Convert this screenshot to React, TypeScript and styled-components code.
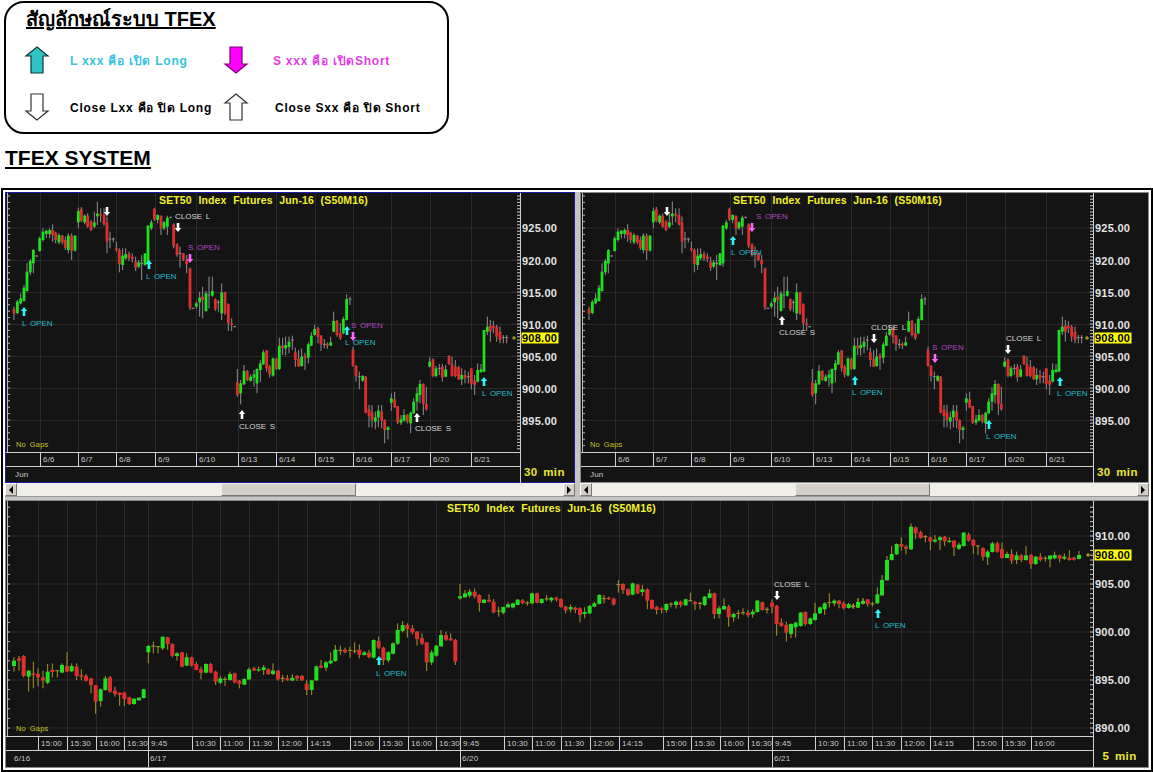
import React from "react";
import styled, { createGlobalStyle } from "styled-components";

/**
 * TFEX signal legend and three SET50 futures charts
 */

type Tone = "g" | "r" | "d";

interface Candle {
  x: number;
  tone: Tone;
  top: number;
  bottom: number;
  wickTop: number;
  wickBottom: number;
}

interface Note {
  x: number;
  y: number;
  text: string;
  tone: "long" | "short" | "close";
}

interface Mark {
  x: number;
  y: number;
  dir: "up" | "down";
  tone: "long" | "short" | "close";
}

// candles were read off a 3x crop, so each block has its crop origin
const readCandles = (originX: number, originY: number, src: string): Candle[] =>
  src
    .trim()
    .split(",")
    .map((row) => {
      const [x, tone, top, bottom, wickTop, wickBottom] = row.trim().split(/\s+/);
      return {
        x: originX + Number(x) / 3,
        tone: tone as Tone,
        top: originY + Number(top) / 3,
        bottom: originY + Number(bottom) / 3,
        wickTop: originY + Number(wickTop) / 3,
        wickBottom: originY + Number(wickBottom) / 3,
      };
    });

const halfHourCandles: Candle[] = [
  ...readCandles(
    0,
    185,
    `42 r 372 386 365 405, 52 g 350 384 345 388, 62 g 340 355 325 358, 72 g 308 348 300 350,
    81 g 260 318 235 320, 91 g 228 262 222 270, 100 g 195 235 192 265, 110 d 213 213 211 215,
    119 g 160 198 155 200, 129 g 140 165 130 170, 139 g 137 147 135 160, 149 g 135 147 130 160,
    158 r 135 150 118 170, 167 r 143 165 140 175, 177 g 150 172 145 178, 187 r 152 172 150 178,
    196 r 165 188 155 195, 205 g 152 195 145 205, 215 r 152 197 145 225, 225 g 152 197 150 200,
    235 g 78 112 68 130, 244 r 72 108 66 112, 254 g 92 112 88 118, 263 r 92 125 85 128,
    273 r 110 135 105 138, 283 g 112 125 80 130, 292 g 86 94 50 120, 302 r 86 92 70 112,
    312 r 90 118 70 122, 321 r 112 170 95 205, 330 d 162 162 140 190, 340 d 162 162 158 172,
    349 r 190 195 170 200, 358 r 195 237 190 262, 368 g 212 240 190 255, 377 g 207 220 190 225,
    387 r 207 220 200 228, 397 r 215 222 205 232, 407 r 230 248 215 258, 416 g 232 245 225 250,
    425 d 235 235 210 285, 435 g 205 240 205 242, 444 g 122 235 120 245, 454 g 112 130 105 135,
    463 r 72 103 68 108, 473 g 90 105 88 115, 483 r 92 130 92 150, 492 g 112 130 108 135,
    502 g 98 125 92 150, 512 d 97 97 95 100, 521 r 118 182 115 190, 531 r 178 210 175 215,
    540 d 205 205 185 248, 550 r 205 225 205 228, 560 r 225 238 210 265, 570 r 250 368 248 375,
    579 d 370 370 368 372, 589 g 355 365 350 370, 599 g 338 352 320 395, 608 r 335 345 305 400,
    618 g 325 378 318 380, 627 d 330 330 275 370, 637 g 318 332 275 335, 646 r 342 372 340 378,
    655 d 352 352 345 380, 665 g 322 385 295 405, 675 r 322 385 320 390, 685 r 358 415 355 438,
    695 r 415 420 400 438, 704 d 425 425 423 427`
  ),
  ...readCandles(
    230,
    285,
    `22 r 292 330 252 335, 32 g 295 325 285 358, 42 g 258 298 240 300, 52 r 258 285 255 288,
    62 g 275 288 268 290, 72 g 268 278 255 305, 81 g 252 295 250 325, 91 g 235 255 225 292,
    100 g 202 238 195 240, 110 r 197 250 195 260, 119 r 245 268 240 278, 129 g 220 272 218 275,
    139 r 222 252 218 255, 148 g 182 252 158 255, 158 r 182 190 158 210, 167 g 180 190 155 212,
    177 g 170 186 155 205, 187 d 165 165 152 195, 196 r 202 225 188 245, 206 r 222 245 195 245,
    215 g 215 243 190 245, 225 r 212 220 205 255, 235 g 178 218 172 235, 244 g 152 182 142 183,
    254 g 132 150 120 152, 264 r 130 155 125 175, 273 r 152 178 150 198, 283 d 178 178 162 190,
    292 r 176 182 172 192, 302 g 172 182 155 182, 311 g 108 140 80 142, 321 r 108 150 105 155,
    331 r 145 160 115 165, 340 g 102 145 95 148, 350 g 42 105 28 107, 360 d 42 42 35 60`
  ),
  ...readCandles(
    300,
    340,
    `159 r 30 78 20 80, 168 r 78 108 75 125, 178 d 110 110 95 148, 188 g 108 122 105 125,
    197 r 110 218 108 220, 207 r 208 228 195 262, 216 r 218 240 195 262, 226 g 232 245 215 268,
    235 g 212 232 195 262, 245 r 215 242 195 265, 254 r 240 270 238 310, 264 g 262 270 258 298,
    274 g 175 188 160 212, 284 r 178 202 155 205, 293 r 198 248 198 252, 303 g 238 248 225 255,
    312 g 225 242 208 245, 322 r 225 245 222 250, 332 g 218 250 215 280, 341 g 185 220 175 222,
    351 g 160 185 142 212, 360 g 132 165 120 190, 370 r 132 192 130 225, 379 r 192 208 140 212,
    389 g 65 80 52 82, 399 r 58 108 55 112, 408 g 85 108 78 112, 418 d 85 85 72 105,
    427 r 80 112 72 125, 437 g 88 110 75 112, 447 r 48 72 45 75, 456 r 72 108 50 110,
    466 r 80 108 60 112, 476 r 82 118 78 120, 485 g 105 118 85 135, 495 r 105 115 90 130,
    505 d 110 110 95 130, 514 r 85 132 85 148, 524 r 122 135 105 165, 533 g 90 125 70 127,
    543 g 88 97 72 97`
  ),
  ...readCandles(
    300,
    185,
    `552 g 435 560 435 560, 562 g 425 440 395 450, 571 r 422 440 405 470, 580 r 422 430 408 445,
    590 r 425 455 420 470, 600 r 440 465 425 475, 610 d 458 458 450 475, 620 d 458 458 450 475`
  ),
];

const fiveMinCandles: Candle[] = [
  ...readCandles(
    0,
    620,
    `42 g 122 138 112 155, 57 r 115 122 108 152, 71 r 108 168 105 172, 86 g 152 170 150 215,
    100 r 160 165 125 205, 114 r 162 172 145 198, 129 r 172 182 152 205, 143 g 155 188 132 192,
    157 r 150 156 130 172, 172 d 152 152 150 172, 186 g 135 158 130 158, 201 r 138 155 97 155,
    215 g 138 154 130 156, 230 r 140 168 130 180, 244 r 165 170 148 180, 258 r 168 182 162 185,
    273 r 175 195 175 220, 287 r 195 245 195 282, 302 g 208 243 205 260, 316 g 175 210 168 212,
    330 r 172 215 168 218, 345 r 212 222 200 230, 359 r 218 225 218 258, 373 r 218 237 215 258,
    388 r 232 252 230 255, 402 g 236 252 235 254, 417 g 233 241 232 242, 431 g 208 234 207 235,
    445 g 78 97 75 130, 460 d 78 78 65 100, 474 d 80 80 78 100, 488 g 50 85 50 90,
    503 r 52 72 50 90, 517 r 72 108 70 112, 531 g 100 108 97 122, 546 r 97 140 95 142,
    560 g 112 137 100 138, 575 r 112 137 110 140, 589 r 132 150 125 150, 603 r 148 158 140 178,
    618 g 132 158 130 160, 632 r 132 158 128 160, 647 r 155 185 152 195, 661 g 175 188 168 192,
    675 d 178 178 170 198, 690 g 162 180 155 182, 704 r 160 187 158 190, 718 r 182 192 180 205,
    733 g 177 194 175 195, 747 g 148 178 142 180, 762 r 145 152 140 153, 776 g 148 152 140 155,
    791 g 142 150 135 165, 805 r 148 162 145 165, 819 g 152 162 130 165, 834 r 152 178 150 182,
    848 d 175 175 165 187, 862 r 175 181 165 182, 877 g 175 181 165 182`
  ),
  ...readCandles(
    290,
    575,
    `7 g 310 316 298 318, 21 r 303 310 300 318, 36 r 303 316 300 318, 50 r 326 345 316 360,
    65 g 316 345 315 360, 79 g 274 316 272 318, 93 r 272 278 255 280, 108 g 262 278 258 288,
    122 g 257 265 232 268, 136 g 224 258 210 260, 151 d 226 226 212 240, 165 r 224 232 218 235,
    180 d 226 226 215 248, 194 d 228 228 202 235, 208 r 224 240 208 250, 223 g 232 240 228 242,
    237 r 233 246 225 250, 251 g 195 248 193 250, 266 r 198 218 185 222, 280 r 218 256 215 270,
    295 g 232 256 228 262, 309 g 205 236 202 238, 323 g 165 206 145 210, 338 g 150 168 138 172,
    352 r 150 162 145 188, 367 r 160 172 150 178, 381 r 170 192 168 212, 396 r 190 206 175 210,
    410 r 202 262 202 288, 425 g 232 262 225 270, 439 g 212 242 210 245, 453 g 180 214 165 215,
    468 r 180 194 170 198, 482 r 190 196 175 198, 496 r 195 260 192 270, 510 g 64 70 27 74,
    525 g 55 67 45 68, 539 g 50 62 42 68, 554 r 50 64 40 70, 568 r 60 84 58 110,
    582 g 74 84 72 85, 597 r 74 80 58 82, 611 r 80 112 72 115, 626 d 108 108 95 125,
    640 g 96 113 95 118, 654 g 88 97 82 98, 669 g 85 97 83 100, 683 g 74 90 72 90,
    698 r 76 84 72 88, 712 d 84 84 78 92, 726 g 55 85 53 88, 741 r 55 83 53 85,
    755 g 72 84 70 86, 770 d 72 72 60 78, 784 g 68 76 66 82, 799 r 68 74 65 80,
    813 r 72 96 70 98, 827 r 95 106 92 115, 842 g 96 103 88 112, 856 r 98 105 95 115`
  ),
  ...readCandles(
    570,
    570,
    `30 r 115 135 112 157, 44 g 126 132 112 145, 59 g 108 130 105 132, 73 g 100 110 95 112,
    88 g 75 102 73 103, 102 d 86 86 75 100, 116 r 83 88 80 90, 131 r 86 103 83 107,
    145 d 44 44 30 68, 159 r 42 60 40 72, 174 r 58 75 55 78, 188 g 40 74 38 76,
    203 r 44 70 42 72, 217 g 58 66 45 78, 232 r 58 92 55 118, 246 r 90 116 88 118,
    260 r 110 120 108 133, 275 r 115 120 112 130, 289 g 102 120 100 128, 303 d 102 102 97 112,
    318 g 95 105 92 116, 332 r 95 105 92 112, 347 g 88 106 86 107, 361 d 92 92 68 95,
    375 r 96 102 93 120, 390 d 100 100 95 118, 404 g 80 105 78 108, 419 g 70 84 57 85,
    433 r 70 132 68 147, 447 g 115 132 108 145, 462 g 108 118 85 120, 476 r 110 142 105 170,
    491 g 132 142 128 155, 505 d 130 130 120 147, 519 d 128 128 115 135, 534 r 128 135 120 142,
    548 g 125 133 118 143, 562 g 92 126 90 128, 577 r 97 120 95 122, 591 d 118 118 112 130,
    606 r 98 110 88 130, 620 r 107 162 105 197, 634 r 158 168 145 170, 649 r 165 188 155 215,
    663 g 162 192 160 204, 677 g 158 172 155 203, 692 g 128 168 126 170, 706 r 126 162 124 167,
    721 g 145 162 143 165, 735 g 130 150 98 152, 750 g 112 130 110 132, 764 g 100 118 97 135,
    778 d 98 98 70 112, 793 g 92 100 88 108, 807 r 92 102 90 115, 821 r 100 115 95 118,
    836 g 102 114 98 116, 850 d 108 108 100 116, 864 g 96 112 85 114, 879 g 93 100 85 102`
  ),
  ...readCandles(
    853,
    500,
    `0 d 320 320 312 326, 15 g 306 322 295 324, 30 g 304 311 295 314, 44 r 298 312 297 320,
    58 d 312 312 305 320, 73 g 283 310 262 312, 87 g 240 286 225 288, 102 g 180 241 168 242,
    116 g 162 180 138 182, 131 g 132 163 130 165, 145 r 132 140 112 152, 159 r 140 146 135 163,
    174 g 80 148 70 150, 188 r 82 100 80 118, 203 r 97 114 92 116, 217 d 110 110 105 127,
    232 r 112 124 110 150, 246 g 119 125 105 128, 261 g 112 120 108 150, 275 r 110 124 108 138,
    289 g 122 126 112 128, 303 r 122 142 120 168, 318 g 134 146 128 150, 332 g 98 138 96 140,
    347 r 104 122 98 125, 361 r 120 137 117 162, 375 d 138 138 135 165, 390 r 144 170 142 182,
    404 g 155 172 150 195, 418 g 130 156 125 158, 433 r 130 155 125 158, 447 r 148 174 128 176,
    462 g 162 174 155 175, 476 r 162 182 148 192, 491 g 166 180 155 192, 505 r 166 180 162 186,
    519 g 166 180 138 182, 534 r 165 192 162 207, 548 g 170 192 168 195, 562 r 170 180 160 184,
    577 d 175 175 168 185, 591 g 167 178 165 202, 605 g 165 175 155 178, 620 r 166 176 164 187,
    634 g 170 176 160 180, 649 r 173 180 150 182, 663 r 173 179 170 182, 678 g 165 177 153 178`
  ),
];

const halfHourLevels = [
  { label: "925.00", y: 228 },
  { label: "920.00", y: 260.5 },
  { label: "915.00", y: 292.5 },
  { label: "910.00", y: 324.5 },
  { label: "905.00", y: 356.5 },
  { label: "900.00", y: 388.5 },
  { label: "895.00", y: 420.5 },
];

const fiveMinLevels = [
  { label: "910.00", y: 536 },
  { label: "905.00", y: 584 },
  { label: "900.00", y: 632 },
  { label: "895.00", y: 680 },
  { label: "890.00", y: 728 },
];

const dayLabels = ["6/6", "6/7", "6/8", "6/9", "6/10", "6/13", "6/14", "6/15", "6/16", "6/17", "6/20", "6/21"];
const dayBreaks = [40, 78, 116, 155, 196, 238, 276, 315, 353, 391, 430, 471];

const clockTicks: [number, string][] = [
  [38, "15:00"], [67, "15:30"], [96, "16:00"], [124, "16:30"], [148, "9:45"], [192, "10:30"],
  [220, "11:00"], [249, "11:30"], [278, "12:00"], [307, "14:15"], [350, "15:00"], [379, "15:30"],
  [408, "16:00"], [436, "16:30"], [460, "9:45"], [504, "10:30"], [532, "11:00"], [561, "11:30"],
  [590, "12:00"], [619, "14:15"], [663, "15:00"], [691, "15:30"], [720, "16:00"], [748, "16:30"],
  [772, "9:45"], [815, "10:30"], [844, "11:00"], [872, "11:30"], [901, "12:00"], [930, "14:15"],
  [973, "15:00"], [1002, "15:30"], [1031, "16:00"],
];

const GlobalStyle = createGlobalStyle`
  html, body {
    margin: 0;
    padding: 0;
    background: #fff;
    overflow: hidden;
  }
  body {
    font-family: "Liberation Sans", "Noto Sans", sans-serif;
  }
`;

const Page = styled.div`
  width: 1153px;
  height: 772px;
  display: flex;
  flex-direction: column;
  background: #fff;
`;

const Legend = styled.section`
  box-sizing: border-box;
  width: 445px;
  height: 133px;
  margin: 1px 0 0 4px;
  padding: 4px 0 0 20px;
  border: 2px solid #000;
  border-radius: 20px;
  display: grid;
  grid-template-columns: 44px 155px 48px 1fr;
  grid-template-rows: 24px 58px 36px;
  align-items: center;
`;

const LegendTitle = styled.h2`
  grid-column: 1 / -1;
  margin: 0;
  font-size: 20px;
  font-weight: 700;
  line-height: 24px;
  color: #000;
  text-decoration: underline;
`;

const LegendText = styled.span<{ $color: string; $indent?: number }>`
  font-size: 12px;
  font-weight: 700;
  letter-spacing: 0.75px;
  white-space: nowrap;
  color: ${(p) => p.$color};
  padding-left: ${(p) => p.$indent ?? 0}px;
`;

const ArrowIcon = styled.svg`
  display: block;
  margin-left: -2px;
`;

const SystemTitle = styled.h1`
  margin: 12px 0 0 5px;
  font-size: 21px;
  font-weight: 700;
  line-height: 24px;
  color: #000;
  text-decoration: underline;
`;

const Frame = styled.div`
  box-sizing: border-box;
  width: 1152px;
  height: 584px;
  margin: 18px 0 0 1px;
  padding: 2px;
  border: 2px solid #000;
  background: #fff;
`;

const Panes = styled.div`
  width: 1144px;
  height: 576px;
  display: grid;
  grid-template-columns: 570px 569px;
  grid-template-rows: 305px 268px;
  column-gap: 5px;
  row-gap: 3px;
  background: #c4c4c4;
`;

const Pane = styled.div<{ $span?: boolean }>`
  display: flex;
  flex-direction: column;
  grid-column: ${(p) => (p.$span ? "1 / -1" : "auto")};
  min-height: 0;
`;

const ChartBody = styled.div<{ $plot: number; $plotHeight: number; $active?: boolean }>`
  flex: 1;
  min-height: 0;
  display: grid;
  grid-template-columns: ${(p) => p.$plot}px 1fr;
  grid-template-rows: ${(p) => p.$plotHeight}px 15px 16px;
  border: 1px solid ${(p) => (p.$active ? "#1c1ca8" : "#8a8a8a")};
  background: #141414;
`;

const Strip = styled.div`
  box-sizing: border-box;
  grid-column: 1;
  display: flex;
  height: 100%;
  border-bottom: 1px solid #cfcfcf;
  border-top: 1px solid #cfcfcf;
  font-size: 8px;
  line-height: 13px;
  color: #c8c8c8;
`;

const MonthStrip = styled.div`
  grid-column: 1;
  display: flex;
  font-size: 8px;
  line-height: 15px;
  color: #c8c8c8;
`;

const StripCell = styled.span<{ $mark?: boolean }>`
  box-sizing: border-box;
  flex: none;
  padding-left: 2px;
  letter-spacing: 0.2px;
  white-space: nowrap;
  overflow: hidden;
  border-left: ${(p) => (p.$mark ? "1px solid #cfcfcf" : "0")};
`;

const Interval = styled.div`
  grid-column: 2;
  grid-row: 2 / span 2;
  border-left: 1px solid #cfcfcf;
  padding: 13px 0 0 3px;
  font-size: 11.5px;
  font-weight: 700;
  letter-spacing: 0.4px;
  word-spacing: 2px;
  line-height: 14px;
  color: #e8e830;
  white-space: pre;
`;

const PriceAxis = styled.svg`
  display: block;
  grid-column: 2;
  grid-row: 1;
  box-sizing: border-box;
  width: 100%;
  border-left: 1px solid #cfcfcf;
`;

const Plot = styled.svg`
  display: block;
  grid-column: 1;
  grid-row: 1;
`;

const PriceLabel = styled.text<{ $current?: boolean }>`
  font-family: "Liberation Sans", sans-serif;
  font-size: 11px;
  font-weight: 700;
  letter-spacing: 0.25px;
  fill: ${(p) => (p.$current ? "#000" : "#e4e4e4")};
`;

const ChartTitle = styled.text`
  font-family: "Liberation Sans", sans-serif;
  font-size: 10.5px;
  font-weight: 700;
  letter-spacing: 0.15px;
  word-spacing: 3.5px;
  fill: #f2f22a;
`;

const GapsLabel = styled.text`
  font-family: "Liberation Sans", sans-serif;
  font-size: 7.5px;
  word-spacing: 1.5px;
  letter-spacing: 0.2px;
  fill: #c4c420;
`;

const noteColors = { long: "#22bccc", short: "#b244c4", close: "#d8d8d8" };
const markColors = { long: "#2cf4f4", short: "#ff66ff", close: "#ffffff" };

const NoteText = styled.text<{ $tone: Note["tone"] }>`
  font-family: "Liberation Sans", sans-serif;
  font-size: 8px;
  word-spacing: 1.5px;
  fill: ${(p) => noteColors[p.$tone]};
`;

const ScrollBar = styled.div`
  flex: none;
  height: 13px;
  display: flex;
  background: #efeee9;
  border-bottom: 1px solid #9a9a9a;
`;

const ScrollButton = styled.div<{ $dir: "left" | "right" }>`
  box-sizing: border-box;
  flex: none;
  width: 12px;
  display: flex;
  align-items: center;
  justify-content: center;
  background: #d4d0c8;
  border: 1px solid;
  border-color: #fff #777 #777 #fff;

  &::before {
    content: "";
    border: 4px solid transparent;
    ${(p) => (p.$dir === "left" ? "border-right: 4px solid #000; margin-left: -4px;" : "border-left: 4px solid #000; margin-right: -4px;")}
  }
`;

const ScrollTrack = styled.div`
  flex: 1;
  display: flex;
`;

const ScrollThumb = styled.div<{ $offset: number }>`
  box-sizing: border-box;
  width: 135px;
  margin-left: ${(p) => p.$offset}px;
  background: #d4d0c8;
  border: 1px solid;
  border-color: #eee #777 #777 #eee;
`;

const BigArrow = ({ dir, fill, stroke }: { dir: "up" | "down"; fill: string; stroke: string }) => (
  <ArrowIcon width="26" height="32" viewBox="0 0 26 32">
    <path
      transform={dir === "down" ? "rotate(180 13 16)" : undefined}
      d="M13 3 L24 12 H19 V29 H7 V12 H2 Z"
      fill={fill}
      stroke={stroke}
      strokeWidth="1.2"
    />
  </ArrowIcon>
);

const TinyArrow = ({ x, y, dir, tone }: Mark) => (
  <path
    transform={`translate(${x} ${y})${dir === "down" ? " rotate(180)" : ""}`}
    d="M0 -5 L3.2 -1 H1.3 V4 H-1.3 V-1 H-3.2 Z"
    fill={markColors[tone]}
  />
);

interface ChartProps {
  left: number;
  top: number;
  plotWidth: number;
  plotHeight: number;
  active?: boolean;
  candles: Candle[];
  shift: number;
  bodyWidth: number;
  wickColor: string;
  verticals: number[];
  levels: { label: string; y: number }[];
  step: number;
  current: { y: number; marker: number };
  title: number;
  gaps: number;
  notes: Note[];
  marks: Mark[];
  interval: string;
  children: React.ReactNode;
}

const Chart = ({
  left,
  top,
  plotWidth,
  plotHeight,
  active,
  candles,
  shift,
  bodyWidth,
  wickColor,
  verticals,
  levels,
  step,
  current,
  title,
  gaps,
  notes,
  marks,
  interval,
  children,
}: ChartProps) => {
  const right = left + plotWidth;
  const bottom = top + plotHeight;
  const ticks: number[] = [];
  const anchor = levels[0].y;
  for (let k = -12; k < 120; k++) {
    const y = anchor + k * step;
    if (y > top + 1 && y < bottom) ticks.push(y);
  }

  return (
    <ChartBody $plot={plotWidth} $plotHeight={plotHeight} $active={active}>
      <Plot width={plotWidth} height={plotHeight} viewBox={`${left} ${top} ${plotWidth} ${plotHeight}`}>
        {verticals.map((x) => (
          <line key={x} x1={x + 0.5} x2={x + 0.5} y1={top} y2={bottom} stroke="#2b2b2b" />
        ))}
        {levels.map((l) => (
          <line key={l.y} x1={left} x2={right} y1={l.y} y2={l.y} stroke="#2b2b2b" />
        ))}
        <line x1={left + 1.5} x2={left + 1.5} y1={top} y2={bottom} stroke="#b8b8b8" />
        {ticks.map((y) => (
          <line key={y} x1={left + 1.5} x2={left + 4} y1={y} y2={y} stroke="#b8b8b8" />
        ))}
        {ticks.flatMap((y) => [y, y + step / 2]).map((y) => (
          <line key={y} x1={right - 3} x2={right} y1={y} y2={y} stroke="#c8c8c8" />
        ))}
        <g transform={`translate(${shift} 0)`}>
          {candles.map((c) => (
            <g key={c.x}>
              <line x1={c.x} x2={c.x} y1={c.wickTop} y2={c.wickBottom} stroke={wickColor} />
              {c.tone === "d" ? (
                <line x1={c.x - bodyWidth / 2} x2={c.x + bodyWidth / 2} y1={c.top} y2={c.top} stroke={wickColor} />
              ) : (
                <rect
                  x={c.x - bodyWidth / 2}
                  y={c.top}
                  width={bodyWidth}
                  height={c.bottom - c.top}
                  fill={c.tone === "g" ? "#1fe01f" : "#de2f2f"}
                />
              )}
            </g>
          ))}
        </g>
        <line x1={current.marker} x2={current.marker + 4} y1={current.y} y2={current.y} stroke="#c8b820" />
        <line x1={current.marker + 2} x2={current.marker + 2} y1={current.y - 2} y2={current.y + 2} stroke="#c8b820" />
        <ChartTitle x={title} y={top + 11} xmlSpace="preserve">
          SET50 Index Futures Jun-16 (S50M16)
        </ChartTitle>
        <GapsLabel x={gaps} y={bottom - 5}>
          No Gaps
        </GapsLabel>
        {marks.map((m) => (
          <TinyArrow key={`${m.x}-${m.y}`} {...m} />
        ))}
        {notes.map((n) => (
          <NoteText key={`${n.x}-${n.y}`} x={n.x} y={n.y + 3} $tone={n.tone}>
            {n.text}
          </NoteText>
        ))}
      </Plot>
      <PriceAxis height={plotHeight}>
        <g transform={`translate(0 ${-top})`}>
          {levels.map((l) => (
            <PriceLabel key={l.label} x={1} y={l.y + 4}>
              {l.label}
            </PriceLabel>
          ))}
          <rect x={0.5} y={current.y - 5.5} width={37} height={11} fill="#ffff00" />
          <PriceLabel x={1} y={current.y + 4} $current>
            908.00
          </PriceLabel>
        </g>
      </PriceAxis>
      {children}
      <Interval>{interval}</Interval>
    </ChartBody>
  );
};

const DayStrips = ({ offset, plotWidth }: { offset: number; plotWidth: number }) => {
  const edges = [...dayBreaks.map((x) => x - 6), plotWidth];
  return (
    <>
      <Strip>
        <StripCell style={{ width: edges[0] }} />
        {dayLabels.map((d, i) => (
          <StripCell key={d} $mark style={{ width: edges[i + 1] - edges[i] - (i === 11 ? offset : 0) }}>
            {d}
          </StripCell>
        ))}
      </Strip>
      <MonthStrip>
        <StripCell style={{ paddingLeft: 9 }}>Jun</StripCell>
      </MonthStrip>
    </>
  );
};

const ClockStrips = ({ plotWidth }: { plotWidth: number }) => {
  const edges = [...clockTicks.map(([x]) => x - 6), plotWidth];
  const days: [number, string][] = [
    [0, "6/16"],
    [142, "6/17"],
    [454, "6/20"],
    [766, "6/21"],
  ];
  return (
    <>
      <Strip>
        <StripCell style={{ width: edges[0] }} />
        {clockTicks.map(([x, label], i) => (
          <StripCell key={x} $mark style={{ width: edges[i + 1] - edges[i] }}>
            {label}
          </StripCell>
        ))}
      </Strip>
      <MonthStrip>
        {days.map(([x, label], i) => (
          <StripCell
            key={label}
            $mark={i > 0}
            style={{ width: (i < 3 ? days[i + 1][0] : plotWidth) - x, paddingLeft: i === 0 ? 8 : 1 }}
          >
            {label}
          </StripCell>
        ))}
      </MonthStrip>
    </>
  );
};

const Scroll = ({ offset }: { offset: number }) => (
  <ScrollBar>
    <ScrollButton $dir="left" />
    <ScrollTrack>
      <ScrollThumb $offset={offset} />
    </ScrollTrack>
    <ScrollButton $dir="right" />
  </ScrollBar>
);

const App = () => (
  <Page>
    <GlobalStyle />
    <Legend>
      <LegendTitle>สัญลักษณ์ระบบ TFEX</LegendTitle>
      <BigArrow dir="up" fill="#2cc4c4" stroke="#0a3a3a" />
      <LegendText $color="#35c4dc">L xxx คือ เปิด Long</LegendText>
      <BigArrow dir="down" fill="#ff00ff" stroke="#7a007a" />
      <LegendText $color="#e23ee2">S xxx คือ เปิดShort</LegendText>
      <BigArrow dir="down" fill="#ffffff" stroke="#333" />
      <LegendText $color="#000">Close Lxx คือ ปิด Long</LegendText>
      <BigArrow dir="up" fill="#ffffff" stroke="#333" />
      <LegendText $color="#000" $indent={2}>
        Close Sxx คือ ปิด Short
      </LegendText>
    </Legend>
    <SystemTitle>TFEX SYSTEM</SystemTitle>
    <Frame>
      <Panes>
        <Pane>
          <Chart
            left={6}
            top={193}
            plotWidth={514}
            plotHeight={259}
            active
            candles={halfHourCandles}
            shift={0}
            bodyWidth={2.8}
            wickColor="#8f8f8f"
            verticals={dayBreaks}
            levels={halfHourLevels}
            step={6.4}
            current={{ y: 338, marker: 512 }}
            title={159}
            gaps={16}
            interval="30 min"
            notes={[
              { x: 22, y: 323, text: "L OPEN", tone: "long" },
              { x: 175, y: 216, text: "CLOSE L", tone: "close" },
              { x: 188, y: 247, text: "S OPEN", tone: "short" },
              { x: 146, y: 276, text: "L OPEN", tone: "long" },
              { x: 351, y: 325, text: "S OPEN", tone: "short" },
              { x: 345, y: 342, text: "L OPEN", tone: "long" },
              { x: 239, y: 426, text: "CLOSE S", tone: "close" },
              { x: 415, y: 428, text: "CLOSE S", tone: "close" },
              { x: 482, y: 393, text: "L OPEN", tone: "long" },
            ]}
            marks={[
              { x: 24, y: 312, dir: "up", tone: "long" },
              { x: 107, y: 211, dir: "down", tone: "close" },
              { x: 178, y: 227, dir: "down", tone: "close" },
              { x: 190, y: 258, dir: "down", tone: "short" },
              { x: 149, y: 265, dir: "up", tone: "long" },
              { x: 347, y: 331, dir: "up", tone: "long" },
              { x: 353, y: 336, dir: "down", tone: "short" },
              { x: 242, y: 415, dir: "up", tone: "close" },
              { x: 417, y: 418, dir: "up", tone: "close" },
              { x: 484, y: 382, dir: "up", tone: "long" },
            ]}
          >
            <DayStrips offset={0} plotWidth={514} />
          </Chart>
          <Scroll offset={204} />
        </Pane>
        <Pane>
          <Chart
            left={581}
            top={193}
            plotWidth={512}
            plotHeight={259}
            candles={halfHourCandles}
            shift={575}
            bodyWidth={2.8}
            wickColor="#8f8f8f"
            verticals={dayBreaks.map((x) => x + 575)}
            levels={halfHourLevels}
            step={6.4}
            current={{ y: 338, marker: 1085 }}
            title={733}
            gaps={590}
            interval="30 min"
            notes={[
              { x: 731, y: 252, text: "L OPEN", tone: "long" },
              { x: 756, y: 216, text: "S OPEN", tone: "short" },
              { x: 779, y: 332, text: "CLOSE S", tone: "close" },
              { x: 871, y: 327, text: "CLOSE L", tone: "close" },
              { x: 932, y: 347, text: "S OPEN", tone: "short" },
              { x: 852, y: 392, text: "L OPEN", tone: "long" },
              { x: 986, y: 436, text: "L OPEN", tone: "long" },
              { x: 1006, y: 338, text: "CLOSE L", tone: "close" },
              { x: 1057, y: 393, text: "L OPEN", tone: "long" },
            ]}
            marks={[
              { x: 667, y: 211, dir: "down", tone: "close" },
              { x: 733, y: 241, dir: "up", tone: "long" },
              { x: 752, y: 227, dir: "down", tone: "short" },
              { x: 782, y: 321, dir: "up", tone: "close" },
              { x: 874, y: 338, dir: "down", tone: "close" },
              { x: 935, y: 358, dir: "down", tone: "short" },
              { x: 855, y: 381, dir: "up", tone: "long" },
              { x: 989, y: 425, dir: "up", tone: "long" },
              { x: 1008, y: 349, dir: "down", tone: "close" },
              { x: 1060, y: 382, dir: "up", tone: "long" },
            ]}
          >
            <DayStrips offset={2} plotWidth={512} />
          </Chart>
          <Scroll offset={203} />
        </Pane>
        <Pane $span>
          <Chart
            left={6}
            top={501}
            plotWidth={1087}
            plotHeight={235}
            candles={fiveMinCandles}
            shift={0}
            bodyWidth={4}
            wickColor="#a8962c"
            verticals={clockTicks.map(([x]) => x)}
            levels={fiveMinLevels}
            step={9.6}
            current={{ y: 555, marker: 1086 }}
            title={447}
            gaps={16}
            interval=" 5 min"
            notes={[
              { x: 376, y: 673, text: "L OPEN", tone: "long" },
              { x: 774, y: 584, text: "CLOSE L", tone: "close" },
              { x: 875, y: 625, text: "L OPEN", tone: "long" },
            ]}
            marks={[
              { x: 379, y: 661, dir: "up", tone: "long" },
              { x: 777, y: 595, dir: "down", tone: "close" },
              { x: 878, y: 614, dir: "up", tone: "long" },
            ]}
          >
            <ClockStrips plotWidth={1087} />
          </Chart>
        </Pane>
      </Panes>
    </Frame>
  </Page>
);

export default App;
